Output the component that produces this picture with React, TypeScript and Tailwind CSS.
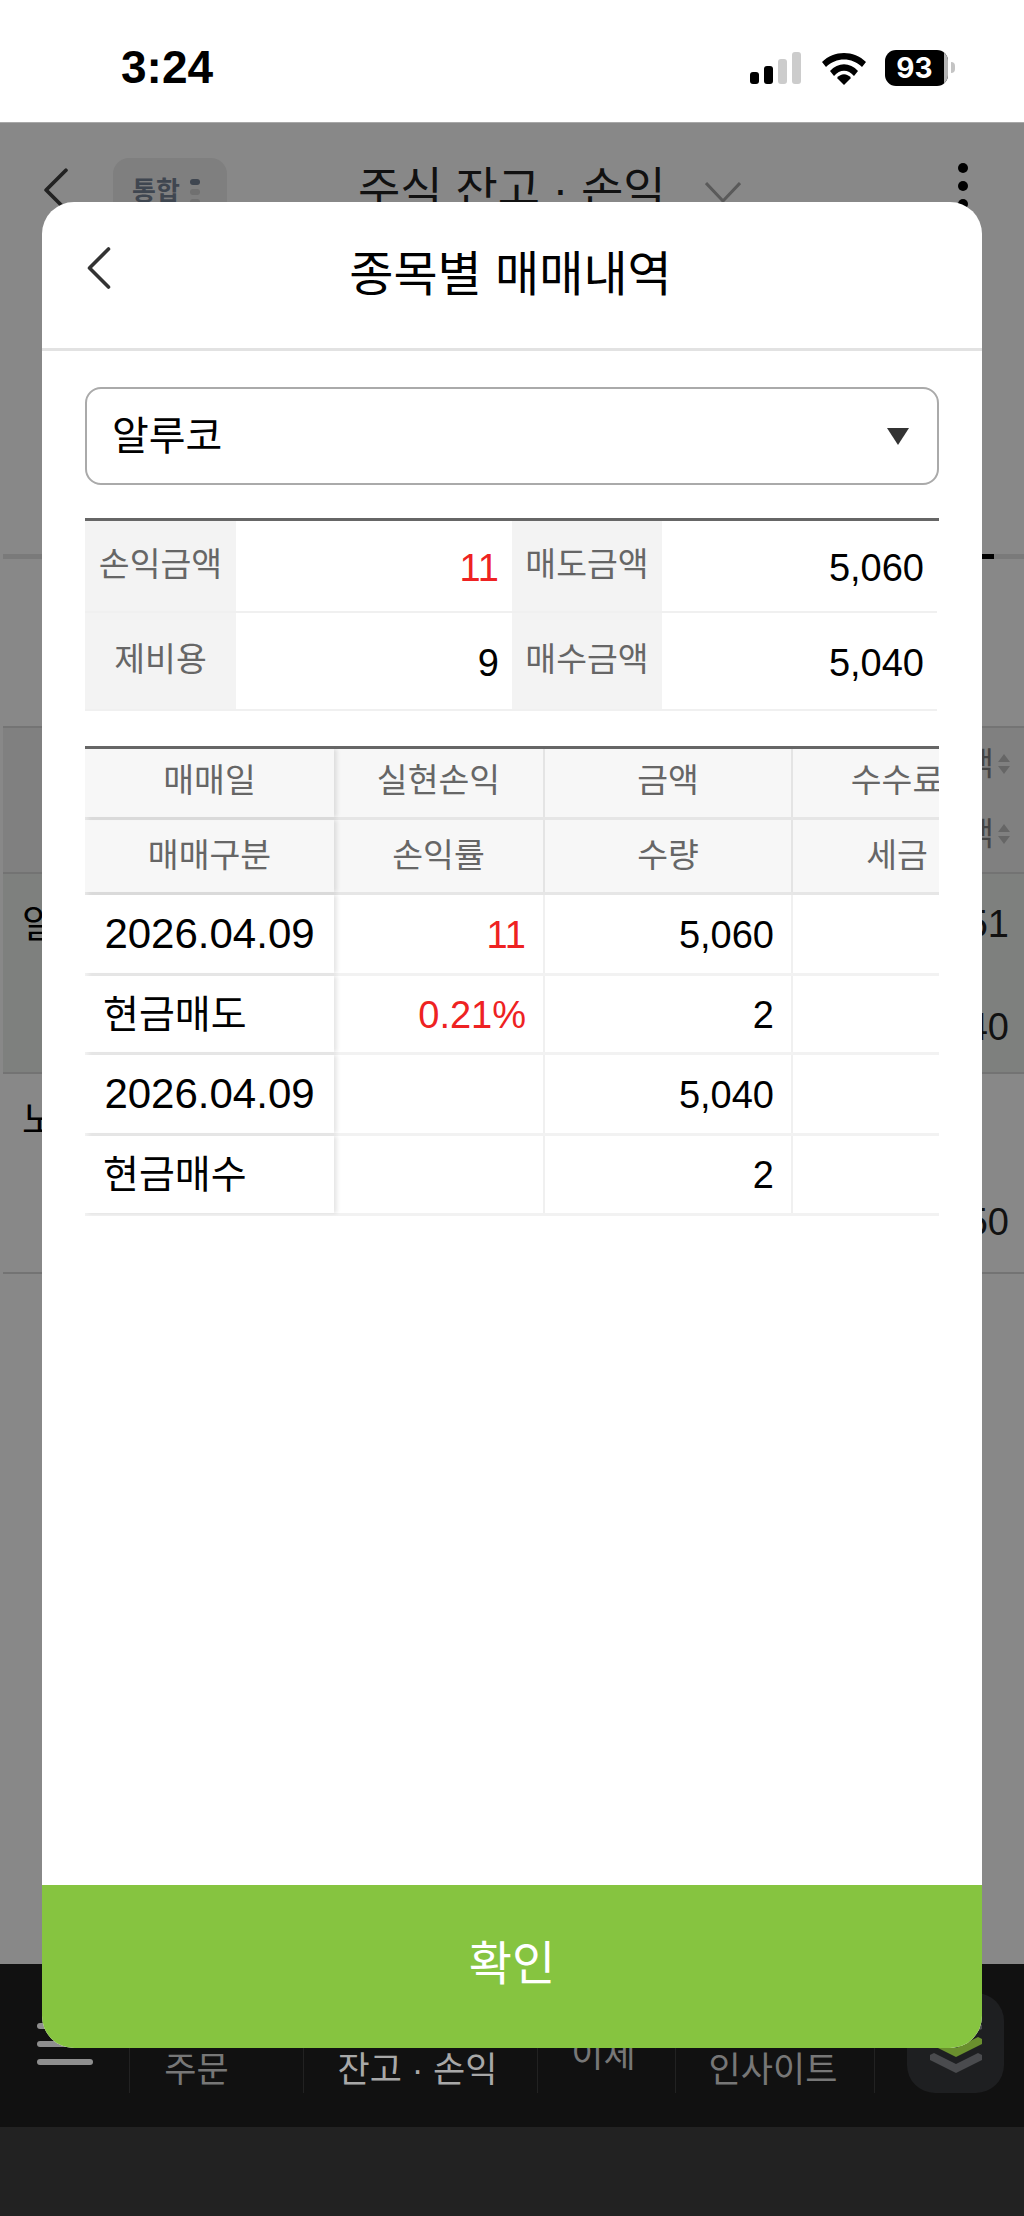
const headRows = [
  { h: "h-[71px]", pad: "pb-[3px]", cells: ["매매일", "실현손익", "금액", "수수료"] },
  { h: "h-[75px]", pad: "pt-[1px]", cells: ["매매구분", "손익률", "수량", "세금"] },
];

const bodyRows = [
  { h: "h-[81px]", first: "2026.04.09", isDate: true, pl: "11", amount: "5,060" },
  { h: "h-[79px]", first: "현금매도", isDate: false, pl: "0.21%", amount: "2" },
  { h: "h-[81px]", first: "2026.04.09", isDate: true, pl: "", amount: "5,040" },
  { h: "h-[80px]", first: "현금매수", isDate: false, pl: "", amount: "2" },
];

function BackChevron({ className }: { className: string }) {
  return (
    <svg className={className} viewBox="0 0 24 42" fill="none">
      <path d="M22 2 L3 21 L22 40" stroke="currentColor" strokeWidth="3.6" strokeLinecap="round" strokeLinejoin="round" />
    </svg>
  );
}

function StatusBar() {
  return (
    <div className="h-[123px] bg-white flex justify-between shrink-0 border-b border-[#a8a8a8]">
      <span className="ml-[121px] mt-[44px] text-[46px] leading-[46px] font-bold text-black">3:24</span>
      <div className="flex items-start mr-[69px] mt-[50px]">
        <svg className="w-[52px] h-[34px] mt-[2px]" viewBox="0 0 52 34">
          <rect x="0" y="20" width="9" height="12" rx="3" fill="#000" />
          <rect x="14" y="14" width="9" height="18" rx="3" fill="#000" />
          <rect x="28" y="7" width="9" height="25" rx="3" fill="#ccc" />
          <rect x="42" y="0" width="9" height="32" rx="3" fill="#ccc" />
        </svg>
        <svg className="w-[46px] h-[34px] ml-[19px] mt-[1px]" viewBox="0 0 46 34">
          <path d="M1 11 C13 -1 33 -1 45 11 L41 16 C31 6 15 6 5 16 Z" fill="#000" />
          <path d="M9 20 C17 11 29 11 37 20 L33 25 C27 18 19 18 13 25 Z" fill="#000" />
          <path d="M16 27 C20 22 26 22 30 27 L23 34 Z" fill="#000" />
        </svg>
        <div className="ml-[18px] w-[63px] h-[36px] rounded-[11px] bg-black overflow-hidden flex relative">
          <span className="flex-1 text-center font-['Inter',sans-serif] font-bold text-[28px] leading-[36px] text-white">93</span>
          <span className="w-[4px] bg-[#b5b5b5]" />
        </div>
        <span className="ml-[3px] mt-[12px] w-[4px] h-[11px] rounded-r-full bg-[#c4c4c4]" />
      </div>
    </div>
  );
}

function SortHead({ label }: { label: string }) {
  return (
    <div className="flex justify-end items-center pr-[14px] gap-[4px]">
      <span className="text-[32px] leading-[40px] text-[#444]">{label}</span>
      <svg className="w-[12px] h-[24px]" viewBox="0 0 12 24">
        <path d="M6 2 L12 10 L0 10 Z M6 22 L12 14 L0 14 Z" fill="#666" />
      </svg>
    </div>
  );
}

function BackgroundPage() {
  return (
    <div className="flex-1 flex flex-col bg-[#888888]">
      <div className="h-[431px] shrink-0 flex items-start">
        <BackChevron className="w-[25px] h-[46px] ml-[43px] mt-[44px] text-[#222]" />
        <div className="ml-[45px] mt-[35px] w-[114px] h-[70px] rounded-[16px] bg-[#7f7f7f] flex items-start pl-[19px] pt-[16px] gap-[10px]">
          <span className="text-[26px] leading-[34px] font-bold text-[#3f4650]">통합</span>
          <div className="flex flex-col gap-[4px] pt-[5px]">
            <span className="w-[10px] h-[6px] rounded-full bg-[#3f4650]" />
            <span className="w-[10px] h-[6px] rounded-full bg-[#707070]" />
            <span className="w-[10px] h-[6px] rounded-full bg-[#707070]" />
          </div>
        </div>
        <span className="ml-[131px] mt-[36px] text-[46px] leading-[60px] text-[#111] whitespace-nowrap">주식 잔고 · 손익</span>
        <svg className="w-[36px] h-[20px] ml-[39px] mt-[59px]" viewBox="0 0 36 20" fill="none">
          <path d="M1 1 L18 19 L35 1" stroke="#5a5a5a" strokeWidth="3" />
        </svg>
        <div className="ml-[217px] mt-[40px] flex flex-col gap-[8px]">
          <span className="w-[10px] h-[10px] rounded-full bg-black" />
          <span className="w-[10px] h-[10px] rounded-full bg-black" />
          <span className="w-[10px] h-[10px] rounded-full bg-black" />
        </div>
      </div>
      <div className="h-[5px] ml-[3px] bg-[#7a7a7a] flex shrink-0">
        <span className="ml-[979px] w-[12px] bg-black" />
      </div>
      <div className="h-[167px] shrink-0" />
      <div className="h-[146px] shrink-0 ml-[3px] bg-[#808080] border-t-2 border-[#747474] pt-[16px] flex flex-col gap-[30px]">
        <SortHead label="금액" />
        <SortHead label="금액" />
      </div>
      <div className="h-[200px] shrink-0 ml-[3px] bg-[#7e807e] border-t-2 border-[#737373] flex justify-between pt-[28px]">
        <span className="ml-[19px] text-[38px] leading-[44px] text-black">알루코</span>
        <div className="flex flex-col text-[38px] leading-[44px] text-[#111] text-right pr-[15px] gap-[59px]">
          <span>5,051</span>
          <span>5,040</span>
        </div>
      </div>
      <div className="h-[200px] shrink-0 ml-[3px] border-t-2 border-[#737373] flex justify-between pt-[24px]">
        <span className="ml-[19px] text-[38px] leading-[44px] text-black">노루</span>
        <span className="self-end mb-[28px] pr-[15px] text-[38px] leading-[44px] text-[#111]">5,050</span>
      </div>
      <div className="border-t-2 border-[#737373] ml-[3px]" />
    </div>
  );
}

function BottomNav() {
  return (
    <div className="shrink-0">
      <div className="h-[163px] bg-[#111111] flex items-start">
        <div className="w-[129px] pl-[37px] pt-[59px] flex flex-col gap-[12px]">
          <span className="w-[56px] h-[6px] rounded-full bg-[#8f8f8f]" />
          <span className="w-[56px] h-[6px] rounded-full bg-[#8f8f8f]" />
          <span className="w-[56px] h-[6px] rounded-full bg-[#8f8f8f]" />
        </div>
        <div className="w-[175px] h-[53px] mt-[76px] border-x border-[#222] pr-[40px] text-center text-[35px] leading-[60px] text-[#777]">주문</div>
        <div className="w-[234px] h-[53px] mt-[76px] border-r border-[#222] pr-[6px] text-center text-[35px] leading-[60px] text-[#a8a8a8] whitespace-nowrap">잔고 · 손익</div>
        <div className="w-[138px] h-[53px] mt-[76px] border-r border-[#222] pr-[6px] text-center text-[35px] leading-[30px] text-[#777]">이체</div>
        <div className="w-[199px] h-[53px] mt-[76px] border-r border-[#222] pr-[4px] text-center text-[35px] leading-[60px] text-[#777]">인사이트</div>
        <div className="ml-[32px] mt-[29px] w-[97px] h-[100px] rounded-[28px] bg-[#1e1f21] flex items-center justify-center">
          <svg className="w-[58px] h-[64px]" viewBox="0 0 58 64">
            <path d="M3 14 L29 2 L55 14 L55 18 L29 30 L3 18 Z" fill="#4a4b4e" />
            <path d="M3 28 L7 26 L29 37 L51 26 L55 28 L55 33 L29 46 L3 33 Z" fill="#6a8f2e" />
            <path d="M3 44 L7 42 L29 53 L51 42 L55 44 L55 49 L29 62 L3 49 Z" fill="#4a4b4e" />
          </svg>
        </div>
      </div>
      <div className="h-[89px] bg-[#222222]" />
    </div>
  );
}

function SummaryTable() {
  const rows = [
    ["손익금액", "11", "매도금액", "5,060"],
    ["제비용", "9", "매수금액", "5,040"],
  ];
  return (
    <div className="mt-[33px] border-t-[3px] border-[#666] grid grid-cols-[151px_276px_150px_275px]">
      {rows.map((row, i) =>
        row.map((text, j) =>
          j % 2 === 0 ? (
            <div key={`${i}-${j}`} className={`${i === 0 ? "h-[92px]" : "h-[98px]"} bg-[#f3f3f3] border-b-[2px] border-[#f0f0f0] flex items-center justify-center pb-[2px] text-[33.5px] text-[#666]`}>
              {text}
            </div>
          ) : (
            <div key={`${i}-${j}`} className={`${i === 0 ? "h-[92px]" : "h-[98px]"} border-b-[2px] border-[#f0f0f0] flex items-center justify-end pr-[13px] pt-[4px] text-[38px] ${text === "11" ? "text-[#ee2222]" : "text-black"}`}>
              {text}
            </div>
          )
        )
      )}
    </div>
  );
}

function TradeTable() {
  return (
    <div className="mt-[35px] border-t-[3px] border-[#666] overflow-hidden">
      <div className="w-[916px]">
        {headRows.map((row) => (
          <div key={row.cells[0]} className={`${row.h} grid grid-cols-[249px_211px_248px_208px] bg-[#f7f7f7] border-b-[3px] border-[#e6e6e6]`}>
            {row.cells.map((cell, i) => (
              <div
                key={cell}
                className={`flex items-center justify-center ${row.pad} text-[33.5px] text-[#666] whitespace-nowrap ${i === 0 ? "shadow-[3px_0_4px_rgba(0,0,0,0.1)]" : ""} ${i === 1 || i === 2 ? "border-r-2 border-[#e4e4e4]" : ""}`}
              >
                {cell}
              </div>
            ))}
          </div>
        ))}
        {bodyRows.map((row, idx) => (
          <div key={idx} className={`${row.h} grid grid-cols-[249px_211px_248px_208px] border-b-[3px] border-[#f2f2f2]`}>
            <div className={`flex items-center bg-white shadow-[3px_0_4px_rgba(0,0,0,0.1)] ${row.isDate ? "justify-center text-[42px] pb-[2px]" : "pl-[18px] text-[39px] pt-[2px]"} text-black`}>
              {row.first}
            </div>
            <div className="flex items-center justify-end pr-[17px] pt-[2px] border-r-2 border-[#f0f0f0] text-[38px] text-[#ee2222]">{row.pl}</div>
            <div className="flex items-center justify-end pr-[17px] pt-[2px] border-r-2 border-[#f0f0f0] text-[38px] text-black">{row.amount}</div>
            <div />
          </div>
        ))}
      </div>
    </div>
  );
}

function TradeModal() {
  return (
    <div className="absolute left-[42px] top-[202px] w-[940px] h-[1846px] rounded-[32px] bg-white overflow-hidden flex flex-col">
      <div className="h-[149px] shrink-0 border-b-[3px] border-[#e2e2e2] relative flex items-center justify-center">
        <BackChevron className="absolute left-[44px] top-[45px] w-[25px] h-[42px] text-[#333]" />
        <span className="text-[48px] leading-[60px] text-black pr-[3px]">종목별 매매내역</span>
      </div>
      <div className="flex-1 px-[43px] pt-[36px]">
        <div className="h-[98px] border-2 border-[#aaaaaa] rounded-[16px] flex items-center justify-between pl-[25px] pr-[28px]">
          <span className="text-[40px] leading-[50px] text-black">알루코</span>
          <svg className="w-[22px] h-[17px]" viewBox="0 0 22 17">
            <path d="M0 0 H22 L11 17 Z" fill="#333" />
          </svg>
        </div>
        <SummaryTable />
        <TradeTable />
      </div>
      <button className="h-[163px] shrink-0 bg-[#86c440] text-white text-[47px] leading-[60px] pb-[6px] text-center">확인</button>
    </div>
  );
}

export default function App() {
  return (
    <div className="relative w-[1024px] h-[2216px] overflow-hidden flex flex-col font-['Liberation_Sans','Noto_Sans_CJK_KR',sans-serif]">
      <StatusBar />
      <BackgroundPage />
      <BottomNav />
      <TradeModal />
    </div>
  );
}
